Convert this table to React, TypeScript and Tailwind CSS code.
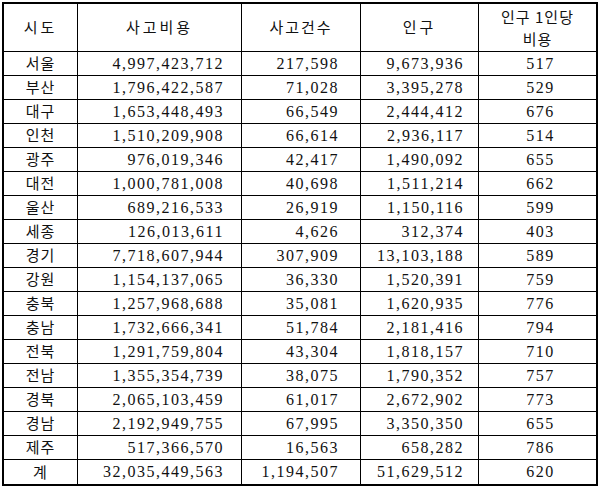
import React from 'react';

type Row = [string, string, string, string, string];

const rows: Row[] = [
  ['서울', '4,997,423,712', '217,598', '9,673,936', '517'],
  ['부산', '1,796,422,587', '71,028', '3,395,278', '529'],
  ['대구', '1,653,448,493', '66,549', '2,444,412', '676'],
  ['인천', '1,510,209,908', '66,614', '2,936,117', '514'],
  ['광주', '976,019,346', '42,417', '1,490,092', '655'],
  ['대전', '1,000,781,008', '40,698', '1,511,214', '662'],
  ['울산', '689,216,533', '26,919', '1,150,116', '599'],
  ['세종', '126,013,611', '4,626', '312,374', '403'],
  ['경기', '7,718,607,944', '307,909', '13,103,188', '589'],
  ['강원', '1,154,137,065', '36,330', '1,520,391', '759'],
  ['충북', '1,257,968,688', '35,081', '1,620,935', '776'],
  ['충남', '1,732,666,341', '51,784', '2,181,416', '794'],
  ['전북', '1,291,759,804', '43,304', '1,818,157', '710'],
  ['전남', '1,355,354,739', '38,075', '1,790,352', '757'],
  ['경북', '2,065,103,459', '61,017', '2,672,902', '773'],
  ['경남', '2,192,949,755', '67,995', '3,350,350', '655'],
  ['제주', '517,366,570', '16,563', '658,282', '786'],
  ['계', '32,035,449,563', '1,194,507', '51,629,512', '620'],
];

const numFont = "font-['Liberation_Serif','Noto_Sans_CJK_KR',serif] text-[16px] tracking-[1.5px]";
const korFont = "font-['Noto_Sans_CJK_KR',sans-serif] text-[15px]";

export default function App() {
  return (
    <div className="bg-white w-[600px] h-[489px] p-[2px] text-[#111]">
      <div className="w-[596px] border-2 border-black grid grid-cols-[74px_164px_119px_118px_117px]">
        {/* Header */}
        <div className={`h-[48px] border-r border-b border-black flex items-center justify-center tracking-[3px] ${korFont}`}>시도</div>
        <div className={`h-[48px] border-r border-b border-black flex items-center justify-center tracking-[3px] ${korFont}`}>사고비용</div>
        <div className={`h-[48px] border-r border-b border-black flex items-center justify-center tracking-[2px] ${korFont}`}>사고건수</div>
        <div className={`h-[48px] border-r border-b border-black flex items-center justify-center tracking-[3px] ${korFont}`}>인구</div>
        <div className={`h-[48px] border-b border-black flex flex-col items-center justify-center leading-[22px] tracking-[1px] ${korFont}`}>
          <span>인구 1인당</span>
          <span>비용</span>
        </div>

        {rows.map((r, i) => {
          const last = i === rows.length - 1;
          const b = last ? '' : 'border-b';
          return (
            <React.Fragment key={r[0]}>
              <div className={`h-[24px] border-r ${b} border-black flex items-center justify-center tracking-[1px] ${korFont}`}>{r[0]}</div>
              <div className={`h-[24px] border-r ${b} border-black flex items-center justify-end pr-[17px] ${numFont}`}>{r[1]}</div>
              <div className={`h-[24px] border-r ${b} border-black flex items-center justify-end pr-[21px] ${numFont}`}>{r[2]}</div>
              <div className={`h-[24px] border-r ${b} border-black flex items-center justify-end pr-[14px] ${numFont}`}>{r[3]}</div>
              <div className={`h-[24px] ${b} border-black flex items-center justify-center pl-[6px] ${numFont}`}>{r[4]}</div>
            </React.Fragment>
          );
        })}
      </div>
    </div>
  );
}
